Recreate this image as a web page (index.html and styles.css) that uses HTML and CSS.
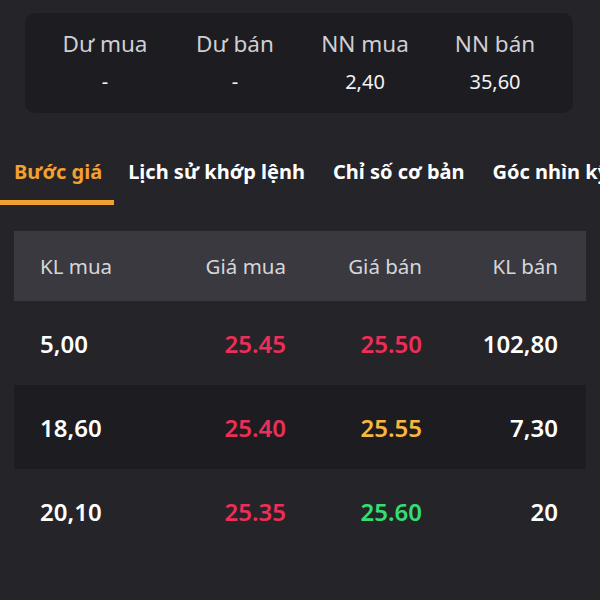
FILE: index.html
```html
<!DOCTYPE html>
<html lang="vi">
<head>
<meta charset="utf-8">
<link rel="stylesheet" href="styles.css">
</head>
<body>
<div class="page">
  <div class="summary">
    <div class="cell"><div class="lbl">Dư mua</div><div class="val">-</div></div>
    <div class="cell"><div class="lbl">Dư bán</div><div class="val">-</div></div>
    <div class="cell"><div class="lbl">NN mua</div><div class="val">2,40</div></div>
    <div class="cell"><div class="lbl">NN bán</div><div class="val">35,60</div></div>
  </div>
  <div class="tabs">
    <div class="tab active">Bước giá</div>
    <div class="tab">Lịch sử khớp lệnh</div>
    <div class="tab">Chỉ số cơ bản</div>
    <div class="tab">Góc nhìn kỹ thuật</div>
  </div>
  <div class="table">
    <div class="row head">
      <div class="c1">KL mua</div><div class="c2">Giá mua</div><div class="c3">Giá bán</div><div class="c4">KL bán</div>
    </div>
    <div class="row">
      <div class="c1">5,00</div><div class="c2 red">25.45</div><div class="c3 red">25.50</div><div class="c4">102,80</div>
    </div>
    <div class="row alt">
      <div class="c1">18,60</div><div class="c2 red">25.40</div><div class="c3 orange">25.55</div><div class="c4">7,30</div>
    </div>
    <div class="row">
      <div class="c1">20,10</div><div class="c2 red">25.35</div><div class="c3 green">25.60</div><div class="c4">20</div>
    </div>
  </div>
</div>
</body>
</html>
```
FILE: styles.css
```css
html, body {
  margin: 0;
  padding: 0;
  background: #252429;
  width: 600px;
  height: 600px;
  overflow: hidden;
  font-family: "Noto Sans", "DejaVu Sans", sans-serif;
}
.page {
  padding-top: 13px;
}
.summary {
  margin: 0 27px 0 25px;
  height: 100px;
  background: #1d1c21;
  border-radius: 10px;
  display: grid;
  grid-template-columns: repeat(4, 130px);
  padding: 0 13px 0 15px;
}
.cell {
  display: flex;
  flex-direction: column;
  align-items: center;
}
.lbl {
  color: #cfcfd3;
  font-size: 22.5px;
  line-height: 28px;
  margin-top: 17px;
}
.val {
  color: #f2f2f4;
  font-size: 20px;
  line-height: 26px;
  margin-top: 11px;
}
.tabs {
  margin-top: 42px;
  display: flex;
  white-space: nowrap;
  height: 50px;
  overflow: hidden;
}
.tab {
  color: #ffffff;
  font-weight: 700;
  font-size: 20px;
  line-height: 28px;
  padding: 3px 14px 0 14px;
}
.tab.active {
  color: #f2a030;
  border-bottom: 5px solid #f2a030;
  padding: 3px 12px 0 14px;
  height: 42px;
}
.table {
  margin: 26px 14px 0 14px;
}
.row {
  display: grid;
  grid-template-columns: 130px 116px 136px 136px;
  padding: 0 28px 0 26px;
  height: 84px;
  align-items: center;
  color: #ffffff;
  font-size: 24px;
  font-weight: 600;
}
.row.head {
  height: 70px;
  background: #3a393f;
  color: #d6d6da;
  font-weight: 400;
  font-size: 20.5px;
}
.row.alt {
  background: #1d1c21;
}
.c1 { text-align: left; }
.c2, .c3, .c4 { text-align: right; }
.red { color: #ec2f58; }
.orange { color: #f6b740; }
.green { color: #34de74; }
```
